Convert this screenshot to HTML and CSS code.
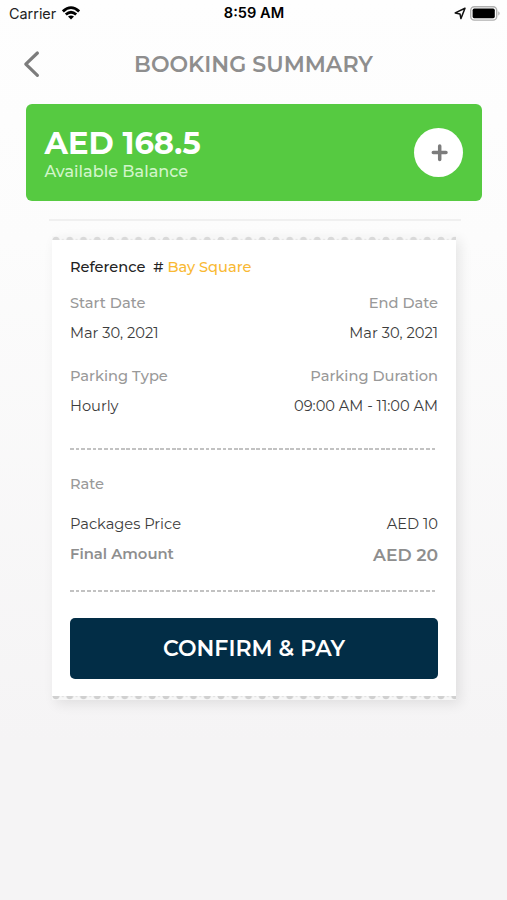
FILE: index.html
```html
<!DOCTYPE html>
<html lang="en">
<head>
<meta charset="utf-8">
<title>Booking Summary</title>
<link rel="stylesheet" href="styles.css">
</head>
<body>
<div class="status">
  <div class="status-left"><span class="carrier">Carrier</span>
    <svg width="18" height="14" viewBox="0 0 18 14" fill="none" stroke="#000" stroke-width="2.8"><path d="M.9 5.4Q9-2.1 17.1 5.4"/><path d="M3.8 8.5Q9 3.9 14.2 8.5"/><path d="M6 10.6Q9 8.2 12 10.6L9 13.6Z" fill="#000" stroke="none"/></svg>
  </div>
  <span class="clock">8:59 AM</span>
  <div class="status-right">
    <svg width="12" height="13" viewBox="0 0 12 13" fill="none" stroke="#111" stroke-width="1.5" stroke-linejoin="round"><path d="M11 1.3L1.2 5.9L6 6.9L6.9 11.6Z"/></svg>
    <svg width="31" height="15" viewBox="0 0 31 15"><rect x=".7" y=".7" width="26" height="13.4" rx="3.6" fill="#fff" stroke="#b0b0b0" stroke-width="1.4"/><rect x="2.6" y="2.6" width="22.2" height="9.6" rx="1.6"/><path d="M28.3 5.2Q31 7.4 28.3 9.7Z" fill="#aaa"/></svg>
  </div>
</div>
<header class="header">
  <svg class="back" width="18" height="28" viewBox="0 0 18 28" fill="none" stroke="#7c7c7c" stroke-width="3.2" stroke-linecap="round" stroke-linejoin="round"><path d="M14.4 3L2.8 14.2L14.4 25.4"/></svg>
  <h1 class="title">BOOKING SUMMARY</h1>
</header>
<section class="balance">
  <div>
    <div class="balance-amount">AED 168.5</div>
    <div class="balance-label">Available Balance</div>
  </div>
  <button class="add" aria-label="Add balance"><svg width="18" height="18" viewBox="0 0 18 18" stroke="#7c7c7c" stroke-width="3.5" stroke-linecap="round"><path d="M9.7 2V15.4M3.3 8.5H16"/></svg></button>
</section>
<div class="rule"></div>
<main class="ticket">
  <svg class="edge" width="404" height="4"><defs><pattern id="top" width="13.75" height="4" patternUnits="userSpaceOnUse"><path d="M.4 4Q1 .8 4 .8Q7 .8 7.6 4Z" fill="#d9d9d9"/><path d="M9.6 3.3H12" stroke="#e2e2e2"/></pattern></defs><rect width="404" height="4" fill="url(#top)"/></svg>
  <div class="body">
    <div class="row reference"><div><span class="ref">Reference&nbsp; #</span> <span class="place">Bay Square</span></div></div>
    <div class="row labels"><span>Start Date</span><span>End Date</span></div>
    <div class="row values"><span>Mar 30, 2021</span><span>Mar 30, 2021</span></div>
    <div class="row labels second"><span>Parking Type</span><span>Parking Duration</span></div>
    <div class="row values"><span>Hourly</span><span>09:00 AM - 11:00 AM</span></div>
    <div class="dashes"></div>
    <div class="row labels rate"><span>Rate</span></div>
    <div class="row values price"><span>Packages Price</span><span>AED 10</span></div>
    <div class="row final"><span>Final Amount</span><span class="total">AED 20</span></div>
    <div class="dashes lower"></div>
    <button class="pay">CONFIRM &amp; PAY</button>
  </div>
  <svg class="edge" width="404" height="4"><defs><pattern id="bottom" width="13.75" height="4" patternUnits="userSpaceOnUse"><path d="M.4 0Q1 3.2 4 3.2Q7 3.2 7.6 0Z" fill="#d0d0d0"/><path d="M9.6 .7H12" stroke="#ddd"/></pattern></defs><rect width="404" height="4" fill="url(#bottom)"/></svg>
</main>
</body>
</html>
```
FILE: styles.css
```css
* { box-sizing: border-box; }
body {
  margin: 0;
  height: 900px;
  overflow: hidden;
  font-family: Montserrat, Inter, sans-serif;
  background: linear-gradient(#fefefe 0, #fcfcfc 240px, #f5f4f5 740px, #f5f4f5 100%);
}
svg { display: block; }
span { white-space: nowrap; }
button { border: 0; padding: 0; font-family: inherit; }
.status {
  height: 28px;
  padding: 0 6px 0 9px;
  display: grid;
  grid-template-columns: 1fr auto 1fr;
  align-items: center;
  font-family: Inter, sans-serif;
}
.status-left, .status-right { display: flex; align-items: center; gap: 6px; margin-top: -2px; }
.status-right { justify-content: flex-end; gap: 4px; }
.carrier { font-size: 14.4px; color: #222; }
.clock { font-size: 14.6px; font-weight: 600; margin: -2px 2px 0 0; }
.header { height: 76px; display: flex; align-items: center; padding: 0 23px 4px; }
.title {
  flex: 1;
  margin: 0 18px 0 0;
  text-align: center;
  font-size: 22.1px;
  font-weight: 600;
  color: #8e8e8e;
}
.balance {
  height: 97px;
  margin: 0 25px 0 26px;
  padding: 0 19px 0 18.5px;
  display: flex;
  align-items: center;
  justify-content: space-between;
  border-radius: 6px;
  background: #56ca41;
}
.balance-amount { font-size: 30.6px; line-height: 36px; font-weight: 700; color: #fff; padding-top: 1px; }
.balance-label { font-size: 16.1px; line-height: 21px; font-weight: 500; color: #d2f5ca; }
.add {
  width: 49px;
  height: 49px;
  border-radius: 50%;
  background: #fff;
  display: grid;
  place-items: center;
}
.rule { height: 2px; margin: 18px 46px 0 49px; background: #f0f0f0; }
.ticket {
  width: 404px;
  margin: 15px 0 0 52px;
  background: #f7f7f7;
  box-shadow: 4px 4px 12px rgba(0, 0, 0, .09);
}
.body { height: 456px; padding: 12px 18px 0; background: #fff; }
.row { height: 30px; display: flex; align-items: center; justify-content: space-between; font-size: 14.65px; color: #3c3c3c; }
.reference { color: #222; font-size: 14.6px; font-weight: 500; margin-bottom: 6px; }
.place { color: #f9b934; }
.labels { color: #999; font-size: 14.65px; font-weight: 500; }
.second { margin-top: 13px; }
.dashes {
  height: 2px;
  margin: 27px 1px 19px 0;
  background: repeating-linear-gradient(90deg, #c2c2c2 0 3.8px, transparent 3.8px 5.65px);
}
.price { margin-top: 10px; }
.final { color: #8e8e8e; font-weight: 600; font-size: 14.8px; }
.total { font-size: 17.2px; }
.lower { margin: 21px 1px 26px 0; }
.pay {
  display: block;
  width: 368px;
  height: 61px;
  border-radius: 5px;
  background: #022d46;
  color: #fff;
  font-size: 22px;
  font-weight: 600;
}
```
